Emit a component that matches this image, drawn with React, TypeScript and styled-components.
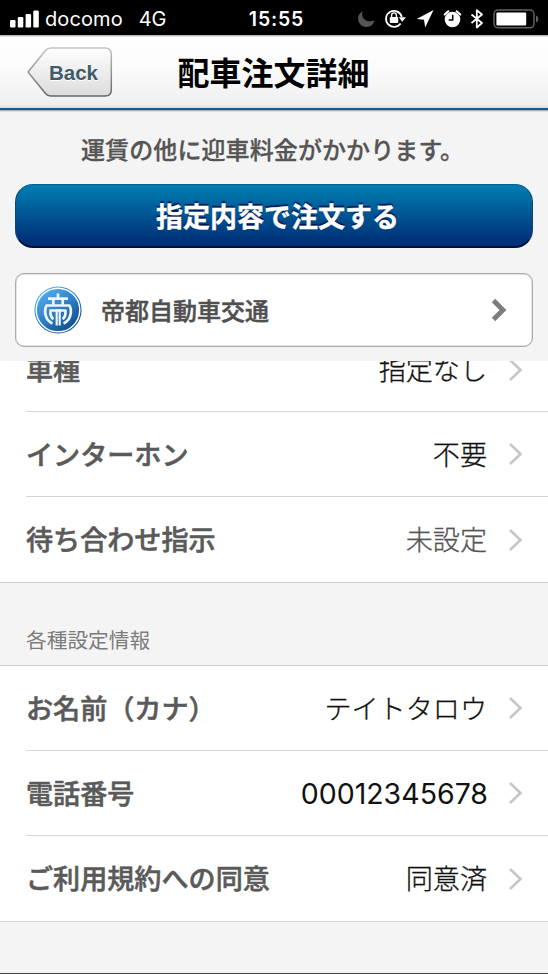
import React from 'react';
import styled, { createGlobalStyle } from 'styled-components';

const jp = `'Noto Sans CJK JP', sans-serif`;

const GlobalStyle = createGlobalStyle`
  * { box-sizing: border-box; }
  body { margin: 0; background: #f4f4f4; font-family: ${jp}; }
`;

const Screen = styled.div`
  width: 548px;
  height: 974px;
  display: flex;
  flex-direction: column;
  overflow: hidden;
  background: #f4f4f4;
  border-bottom: 1px solid #444;
`;

const StatusBar = styled.header`
  flex: none;
  height: 35px;
  padding: 2px 8px 0 10px;
  display: grid;
  grid-template-columns: 1fr auto 1fr;
  align-items: center;
  background: #000;
  color: #fff;
  font-family: Inter, sans-serif;
`;

const Carrier = styled.div`
  display: flex;
  align-items: center;
  font-size: 20px;
  line-height: 24px;
  font-weight: 400;
`;

const CarrierText = styled.span<{ $gap: number; $tracking: number }>`
  margin-left: ${(p) => p.$gap}px;
  letter-spacing: ${(p) => p.$tracking}px;
`;

const Clock = styled.div`
  font-size: 19.5px;
  line-height: 24px;
  font-weight: 600;
  letter-spacing: 0.8px;
  padding-left: 3px;
`;

const StatusIcons = styled.div`
  display: flex;
  justify-content: flex-end;
`;

const NavBar = styled.nav`
  flex: none;
  height: 77px;
  padding: 0 27px 3px;
  display: grid;
  grid-template-columns: 86px 1fr 86px;
  align-items: center;
  background: linear-gradient(#bbb 0, #bbb 1px, #fff 2px, #fcfcfc 30px, #efefef 70px, #d8d8d8 73px, #175a8c 73.5px, #175a8c 75px, #a8b4bd 75.5px, #c8c8c8 76px, #f4f4f4 77px);
`;

const BackButton = styled.button`
  position: relative;
  width: 86px;
  height: 52px;
  margin-top: 1px;
  padding: 0 0 0 7px;
  border: 0;
  background: none;
  color: #425b69;
  font: 700 20.5px 'Liberation Sans', sans-serif;
  text-shadow: 0 1px 0 #fff;
`;

const BackShape = styled.svg`
  position: absolute;
  inset: 0;
`;

const BackLabel = styled.span`
  position: relative;
`;

const Title = styled.h1`
  margin: -2px 0 0 -1px;
  text-align: center;
  color: #000;
  font-size: 32px;
  line-height: 40px;
  font-weight: 700;
`;

const OrderPanel = styled.section`
  flex: none;
  height: 249px;
  padding: 0 15px;
  display: flex;
  flex-direction: column;
`;

const Notice = styled.p`
  margin: 19px 0 17px 66px;
  font-size: 24px;
  line-height: 36px;
  font-weight: 500;
  letter-spacing: 0.1px;
  color: #555;
  -webkit-text-stroke: 0.3px #555;
  white-space: nowrap;
`;

const OrderButton = styled.button`
  height: 64px;
  padding: 0 0 0 7px;
  border: 1px solid #0b4673;
  border-top-color: #075f8c;
  border-bottom: 2px solid #020e38;
  border-radius: 18px;
  background: linear-gradient(#007eb2, #003078 92%);
  color: #fff;
  font: 700 27px/36px ${jp};
  -webkit-text-stroke: 0.4px #fff;
  text-shadow: 0 -2px 1px #001653;
`;

const CompanyCard = styled.button`
  height: 74px;
  margin-top: 25px;
  padding: 0 25px 0 18px;
  display: flex;
  align-items: center;
  border: 1px solid #ababab;
  border-radius: 9px;
  background: #fff;
  box-shadow: inset 0 0 0 0.5px #c4c4c4;
  color: #505050;
  font: 500 24px/36px ${jp};
  -webkit-text-stroke: 0.5px #505050;
`;

const CompanyName = styled.span`
  flex: 1;
  margin-left: 19px;
  text-align: left;
`;

const Details = styled.main`
  flex: 1;
  min-height: 0;
  overflow: hidden;
`;

const List = styled.ul<{ $scrolled?: boolean }>`
  list-style: none;
  margin: ${(p) => (p.$scrolled ? '-33px' : '0')} 0 0;
  padding: 0;
  background: #fff;
  border-bottom: 1px solid #d3d3d5;
`;

const Row = styled.li<{ $height: number }>`
  height: ${(p) => p.$height}px;
  margin-left: 26px;
  padding-right: 25px;
  display: flex;
  align-items: center;
  border-bottom: 1px solid #d6d6d6;
  font-size: 27.1px;
  line-height: 40px;
  white-space: nowrap;

  &:last-child { border-bottom: 0; }
`;

const Label = styled.span`
  flex: 1;
  margin-bottom: 1px;
  color: #5a5a5a;
  font-weight: 500;
  -webkit-text-stroke: 0.55px #5a5a5a;
`;

const Value = styled.span<{ $muted?: boolean; $latin?: boolean }>`
  margin: ${(p) => (p.$latin ? '2px 20px 0 0' : '0 21px 1px 0')};
  color: ${(p) => (p.$muted ? '#555' : '#111')};
  font-weight: ${(p) => (p.$latin ? 400 : 300)};
  -webkit-text-stroke: ${(p) => (p.$latin ? '0' : '0.3px')} currentColor;
  ${(p) => p.$latin && `font-family: Inter, sans-serif; font-size: 28.5px; letter-spacing: 0;`}
`;

const SectionTitle = styled.h2`
  margin: 0;
  height: 83px;
  padding: 40px 26px 0;
  border-bottom: 1px solid #d3d3d5;
  color: #7c7c7c;
  font-size: 20.7px;
  line-height: 32px;
  font-weight: 400;
`;

function Chevron() {
  return (
    <svg width="15" height="24" viewBox="0 0 15 24" fill="none" stroke="#c5c5ca" strokeWidth="2.6">
      <path d="M2 2 12.5 12 2 22" />
    </svg>
  );
}

function SignalBars() {
  return (
    <svg width="29" height="18" viewBox="0 0 29 18" fill="#fff">
      <rect x="0" y="10" width="5.5" height="7.5" rx="1.2" />
      <rect x="7.8" y="7" width="5.5" height="10.5" rx="1.2" />
      <rect x="15.6" y="4" width="5.5" height="13.5" rx="1.2" />
      <rect x="23.3" y="0.5" width="5.5" height="17" rx="1.2" />
    </svg>
  );
}

function SystemIcons() {
  return (
    <svg width="184" height="24" viewBox="0 0 184 24" fill="none">
      <path d="M7 4.200C4 9.500 9 16.500 18.500 13.500A8.300 8.300 0 1 1 7 4.200Z" fill="#555" />
      <g stroke="#fff">
        <path d="M44.600 16.400A8 8 0 1 1 45.800 10" strokeWidth="1.800" />
        <path d="M35.600 10.500V8.300a2.400 2.400 0 0 1 4.800 0V10.500" strokeWidth="1.400" />
      </g>
      <rect x="33.800" y="10" width="8.400" height="6" rx=".8" fill="#fff" />
      <path d="M42.800 10.200H50L46.200 14.800Z" fill="#fff" />
      <path d="M77.500 3 69.200 20.500 68 12.700 60.700 12Z" fill="#fff" />
      <circle cx="96.500" cy="12.500" r="7.800" fill="#fff" />
      <path d="M88.700 7.600 92.300 4.300M104.300 7.600 100.700 4.300" stroke="#fff" strokeWidth="2.100" strokeLinecap="round" />
      <path d="M96.700 7.800V13H92.700" stroke="#000" strokeWidth="1.500" />
      <path d="M115.500 7.500 126 16 120.800 20.500V3.200L126 7.500 115.500 16" stroke="#fff" strokeWidth="1.800" strokeLinejoin="round" />
      <rect x="138" y="3" width="40" height="17.800" rx="4" stroke="#626262" strokeWidth="1.500" />
      <rect x="140.400" y="5.400" width="29.800" height="13" rx="1.200" fill="#fff" />
      <path d="M180 8.500c3 1.200 3 5.800 0 7Z" fill="#626262" />
    </svg>
  );
}

function CompanyLogo() {
  return (
    <svg width="48" height="48" viewBox="0 0 48 48" fill="none">
      <defs>
        <linearGradient id="ring" x1="8" y1="3" x2="40" y2="45" gradientUnits="userSpaceOnUse">
          <stop stopColor="#55b1f4" />
          <stop offset=".5" stopColor="#2f7fc6" />
          <stop offset="1" stopColor="#0a4688" />
        </linearGradient>
      </defs>
      <circle cx="24" cy="24" r="23.6" fill="url(#ring)" />
      <circle cx="24" cy="24" r="21.8" stroke="#fff" strokeWidth="1.4" />
      <g stroke="#eef4f8" strokeWidth="2.7" strokeLinejoin="round">
        <path d="M24 7.5V12.500M14 12.700H34M19.300 13.500V18.800M28.700 13.500V18.800" />
        <path d="M18.500 37.500C11.500 34.500 9.500 25.500 12.500 19.500H35.500C38.500 25.500 36.500 34.500 29.500 37.500" />
        <path d="M19.500 33C16.800 31.500 16.200 28.500 16.500 24.500H31.500C31.800 28.500 31.200 31.500 28.500 33" />
        <path d="M22.700 23V39.500M25.700 23V39.500" strokeWidth="2.200" />
      </g>
    </svg>
  );
}

type Item = { label: string; value: string; height: number; muted?: boolean; latin?: boolean };

const dispatchItems: Item[] = [
  { label: '車種', value: '指定なし', height: 84 },
  { label: 'インターホン', value: '不要', height: 85 },
  { label: '待ち合わせ指示', value: '未設定', height: 85, muted: true },
];

const profileItems: Item[] = [
  { label: 'お名前（カナ）', value: 'テイトタロウ', height: 85 },
  { label: '電話番号', value: '00012345678', height: 85, latin: true },
  { label: 'ご利用規約への同意', value: '同意済', height: 85 },
];

function ItemList({ items, scrolled }: { items: Item[]; scrolled?: boolean }) {
  return (
    <List $scrolled={scrolled}>
      {items.map((item) => (
        <Row key={item.label} $height={item.height}>
          <Label>{item.label}</Label>
          <Value $muted={item.muted} $latin={item.latin}>{item.value}</Value>
          <Chevron />
        </Row>
      ))}
    </List>
  );
}

export default function App() {
  return (
    <Screen>
      <GlobalStyle />
      <StatusBar>
        <Carrier>
          <SignalBars />
          <CarrierText $gap={6} $tracking={0.1}>docomo</CarrierText>
          <CarrierText $gap={16} $tracking={-0.3}>4G</CarrierText>
        </Carrier>
        <Clock>15:55</Clock>
        <StatusIcons><SystemIcons /></StatusIcons>
      </StatusBar>
      <NavBar>
        <BackButton>
          <BackShape width="86" height="52" viewBox="0 0 86 52">
            <defs>
              <linearGradient id="backFill" x1="0" y1="0" x2="0" y2="1">
                <stop stopColor="#fefefe" />
                <stop offset="1" stopColor="#dcdcdc" />
              </linearGradient>
              <linearGradient id="backEdge" x1="0" y1="0" x2="0" y2="1">
                <stop stopColor="#c4c4c4" />
                <stop offset="1" stopColor="#666" />
              </linearGradient>
            </defs>
            <path d="M24 1H78Q84.300 1 84.300 7V43Q84.300 49 78 49H24Q20.500 49 18.500 46.500L1 25 18.500 3.500Q20.500 1 24 1Z" fill="url(#backFill)" stroke="url(#backEdge)" strokeWidth="1.500" />
          </BackShape>
          <BackLabel>Back</BackLabel>
        </BackButton>
        <Title>配車注文詳細</Title>
      </NavBar>
      <OrderPanel>
        <Notice>運賃の他に迎車料金がかかります。</Notice>
        <OrderButton>指定内容で注文する</OrderButton>
        <CompanyCard>
          <CompanyLogo />
          <CompanyName>帝都自動車交通</CompanyName>
          <svg width="16" height="24" viewBox="0 0 16 24" fill="none" stroke="#7d7d7d" strokeWidth="4.800">
            <path d="M2.500 2.500 12 12 2.500 21.500" />
          </svg>
        </CompanyCard>
      </OrderPanel>
      <Details>
        <ItemList items={dispatchItems} scrolled />
        <SectionTitle>各種設定情報</SectionTitle>
        <ItemList items={profileItems} />
      </Details>
    </Screen>
  );
}
